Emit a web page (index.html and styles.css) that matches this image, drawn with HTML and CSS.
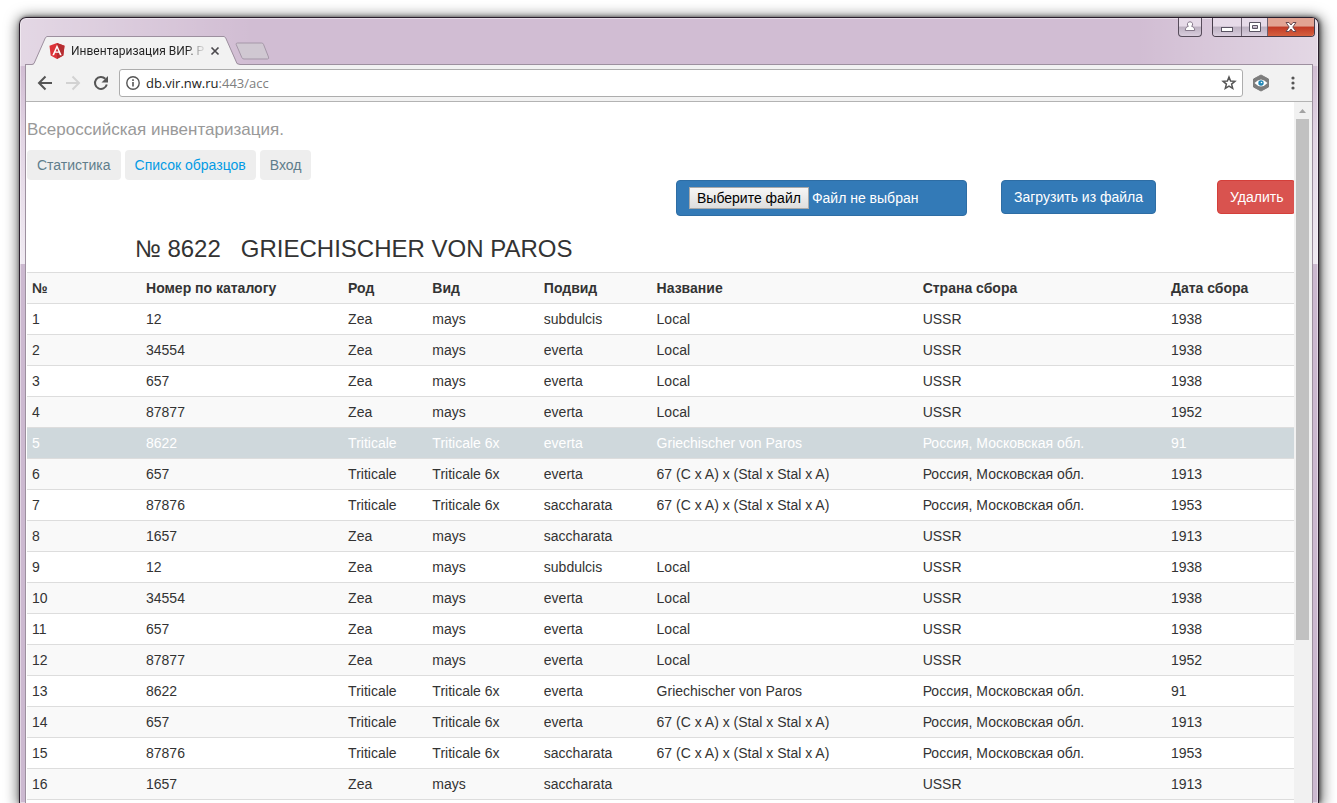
FILE: index.html
```html
<!DOCTYPE html>
<html lang="ru">
<head>
<meta charset="utf-8">
<title>Инвентаризация ВИР</title>
<link rel="stylesheet" href="styles.css">
</head>
<body>
<div class="window">
  <header class="titlebar">
    <div class="tabs">
      <div class="tab">
        <svg class="tab-shape" viewBox="0 0 208 29" preserveAspectRatio="none" aria-hidden="true"><path d="M0 28.500 L1 28.500 L2 28 L13.500 1.500 L15 .5 L192 .5 L193.500 1.500 L205 28 L208 28.500 L208 29 L0 29Z" fill="#f2f2f2"/><path d="M0 28.500 L2 27.500 L13.500 1.500 L15 .5 L192 .5 L193.500 1.500 L205 27.500 L208 28.500" fill="none" stroke="#9d909f"/></svg>
        <svg class="favicon" viewBox="0 0 16 16" aria-hidden="true"><path d="M8 0l7.500 2.700-1.200 9.700L8 16l-6.300-3.600L.5 2.700z" fill="#dd3338"/><path d="M8 0l7.500 2.700-1.200 9.700L8 16z" fill="#b52e31"/><path d="M8 1.800L3.300 12.200h1.800l1-2.400h3.800l1 2.400h1.800zM8 5.200l1.400 3.200H6.600z" fill="#fff"/></svg>
        <span class="tab-title">Инвентаризация ВИР. Р</span>
        <button class="tab-close" aria-label="Закрыть вкладку"><svg width="10" height="10" viewBox="0 0 10 10"><path d="M1.500 1.500l7 7M8.500 1.500l-7 7" stroke="#4c4a4e" stroke-width="1.700"/></svg></button>
      </div>
      <button class="new-tab" aria-label="Новая вкладка"><svg width="35" height="18" viewBox="0 0 35 18"><path d="M2.500 1h24q1.500 0 2 1.300l5 12.700q.7 2-1 2H9q-1.600 0-2.200-1.500L1.200 2.500Q.8 1 2.500 1z" fill="#d0c8d2" stroke="#a597a8"/></svg></button>
    </div>
    <div class="controls">
      <button class="ctl ctl-user" aria-label="Профиль"><svg width="12" height="12" viewBox="0 0 12 12"><path d="M6 .8a2.500 2.500 0 0 1 1.600 4.500c2 .5 3.100 1.700 3.100 4.200H1.300c0-2.500 1.100-3.700 3.100-4.200A2.500 2.500 0 0 1 6 .8z" fill="#fff" stroke="#85788a"/></svg></button>
      <div class="ctl-group">
        <button class="ctl ctl-min" aria-label="Свернуть"><svg width="14" height="12" viewBox="0 0 14 12"><rect x="1.500" y="6.500" width="11" height="4" fill="#fff" stroke="#5a5463"/></svg></button>
        <button class="ctl ctl-max" aria-label="Развернуть"><svg width="12" height="12" viewBox="0 0 12 12"><path d="M.5 1.500h11v9H.5zM3.500 4.500v3h5v-3z" fill="#fff" fill-rule="evenodd" stroke="#5a5463"/></svg></button>
        <button class="ctl ctl-close" aria-label="Закрыть"><svg width="14" height="12" viewBox="0 0 14 12"><path d="M2 1.500h3l2 2.500 2-2.500h3L8.800 6l3.200 4.500H9L7 8l-2 2.500H2L5.200 6z" fill="#fff" stroke="#6a4a50"/></svg></button>
      </div>
    </div>
  </header>

  <div class="browser">
    <nav class="toolbar" aria-label="Навигация">
      <button class="tool" aria-label="Назад"><svg width="16" height="16" viewBox="0 0 16 16"><path d="M15 8H2.500M8.500 1.500L2 8l6.500 6.500" fill="none" stroke="#555" stroke-width="2"/></svg></button>
      <button class="tool" aria-label="Вперёд"><svg width="16" height="16" viewBox="0 0 16 16"><path d="M1 8h12.500M7.500 1.500L14 8l-6.500 6.500" fill="none" stroke="#d2d2d2" stroke-width="2"/></svg></button>
      <button class="tool" aria-label="Обновить"><svg width="16" height="16" viewBox="0 0 16 16"><path d="M13.800 9.500A6 6 0 1 1 12.300 3.700" fill="none" stroke="#555" stroke-width="2"/><path d="M15 1v6.500H8.500z" fill="#555"/></svg></button>
      <div class="omnibox">
        <svg width="14" height="14" viewBox="0 0 14 14" aria-hidden="true"><circle cx="7" cy="7" r="6.200" fill="none" stroke="#555" stroke-width="1.400"/><path d="M6.200 6h1.600v4.500H6.200zM6.200 3.300h1.600v1.600H6.200z" fill="#555"/></svg>
        <span class="url">db.vir.nw.ru<span class="url-path">:443/acc</span></span>
        <button class="star" aria-label="В закладки"><svg width="16" height="16" viewBox="0 0 16 16"><path d="M8 2l1.600 4 4.300.3-3.300 2.800 1.100 4.300L8 11.100l-3.700 2.300 1.100-4.300-3.300-2.800 4.300-.3z" fill="none" stroke="#555" stroke-width="1.500"/></svg></button>
      </div>
      <button class="tool ext" aria-label="Расширение"><svg width="18" height="18" viewBox="0 0 18 18"><path d="M9 1l7.500 4v8L9 17l-7.500-4V5z" fill="#7c7c7c" stroke="#7c7c7c" stroke-linejoin="round"/><path d="M2.500 9Q9 2 15.500 9 9 16 2.500 9z" fill="#fff"/><circle cx="9" cy="9" r="2.700" fill="#2487b5"/><circle cx="9.500" cy="8.500" r=".8" fill="#fff"/></svg></button>
      <button class="tool menu" aria-label="Меню"><svg width="4" height="14" viewBox="0 0 4 14"><circle cx="2" cy="2" r="1.600" fill="#555"/><circle cx="2" cy="7" r="1.600" fill="#555"/><circle cx="2" cy="12" r="1.600" fill="#555"/></svg></button>
    </nav>

    <div class="viewport">
      <main class="page">
        <p class="brand">Всероссийская инвентаризация.</p>
        <nav class="nav" aria-label="Разделы">
          <a href="#stat">Статистика</a>
          <a href="#list" class="active">Список образцов</a>
          <a href="#login">Вход</a>
        </nav>
        <div class="actions">
          <label class="btn btn-primary file"><input type="file" class="file-input"><span class="file-button">Выберите файл</span><span>Файл не выбран</span></label>
          <button class="btn btn-primary upload">Загрузить из файла</button>
          <button class="btn btn-danger remove">Удалить</button>
        </div>
        <h3 class="heading"><span>№ 8622</span><span>GRIECHISCHER VON PAROS</span></h3>
        <table class="samples">
          <colgroup><col class="c-num"><col class="c-cat"><col class="c-genus"><col class="c-species"><col class="c-sub"><col class="c-name"><col class="c-country"><col class="c-date"></colgroup>
          <thead><tr><th>№</th><th>Номер по каталогу</th><th>Род</th><th>Вид</th><th>Подвид</th><th>Название</th><th>Страна сбора</th><th>Дата сбора</th></tr></thead>
          <tbody>
            <tr><td>1</td><td>12</td><td>Zea</td><td>mays</td><td>subdulcis</td><td>Local</td><td>USSR</td><td>1938</td></tr>
            <tr><td>2</td><td>34554</td><td>Zea</td><td>mays</td><td>everta</td><td>Local</td><td>USSR</td><td>1938</td></tr>
            <tr><td>3</td><td>657</td><td>Zea</td><td>mays</td><td>everta</td><td>Local</td><td>USSR</td><td>1938</td></tr>
            <tr><td>4</td><td>87877</td><td>Zea</td><td>mays</td><td>everta</td><td>Local</td><td>USSR</td><td>1952</td></tr>
            <tr class="selected"><td>5</td><td>8622</td><td>Triticale</td><td>Triticale 6x</td><td>everta</td><td>Griechischer von Paros</td><td>Россия, Московская обл.</td><td>91</td></tr>
            <tr><td>6</td><td>657</td><td>Triticale</td><td>Triticale 6x</td><td>everta</td><td>67 (C x A) x (Stal x Stal x A)</td><td>Россия, Московская обл.</td><td>1913</td></tr>
            <tr><td>7</td><td>87876</td><td>Triticale</td><td>Triticale 6x</td><td>saccharata</td><td>67 (C x A) x (Stal x Stal x A)</td><td>Россия, Московская обл.</td><td>1953</td></tr>
            <tr><td>8</td><td>1657</td><td>Zea</td><td>mays</td><td>saccharata</td><td></td><td>USSR</td><td>1913</td></tr>
            <tr><td>9</td><td>12</td><td>Zea</td><td>mays</td><td>subdulcis</td><td>Local</td><td>USSR</td><td>1938</td></tr>
            <tr><td>10</td><td>34554</td><td>Zea</td><td>mays</td><td>everta</td><td>Local</td><td>USSR</td><td>1938</td></tr>
            <tr><td>11</td><td>657</td><td>Zea</td><td>mays</td><td>everta</td><td>Local</td><td>USSR</td><td>1938</td></tr>
            <tr><td>12</td><td>87877</td><td>Zea</td><td>mays</td><td>everta</td><td>Local</td><td>USSR</td><td>1952</td></tr>
            <tr><td>13</td><td>8622</td><td>Triticale</td><td>Triticale 6x</td><td>everta</td><td>Griechischer von Paros</td><td>Россия, Московская обл.</td><td>91</td></tr>
            <tr><td>14</td><td>657</td><td>Triticale</td><td>Triticale 6x</td><td>everta</td><td>67 (C x A) x (Stal x Stal x A)</td><td>Россия, Московская обл.</td><td>1913</td></tr>
            <tr><td>15</td><td>87876</td><td>Triticale</td><td>Triticale 6x</td><td>saccharata</td><td>67 (C x A) x (Stal x Stal x A)</td><td>Россия, Московская обл.</td><td>1953</td></tr>
            <tr><td>16</td><td>1657</td><td>Zea</td><td>mays</td><td>saccharata</td><td></td><td>USSR</td><td>1913</td></tr>
          </tbody>
        </table>
      </main>
      <div class="scrollbar" aria-hidden="true">
        <svg class="scroll-up" viewBox="0 0 13 17"><path d="M3 11l3.500-4 3.500 4z" fill="#a3a3a3"/></svg>
        <div class="thumb"></div>
      </div>
    </div>
  </div>
</div>
</body>
</html>
```
FILE: styles.css
```css
* { box-sizing: border-box; }

body {
  margin: 0;
  height: 100vh;
  padding: 17px 18px 0 19px;
  overflow: hidden;
  background: #fff;
  color: #333;
  font: 14px/20px "Liberation Sans", Arial, sans-serif;
}

button {
  margin: 0;
  padding: 0;
  border: 0;
  background: none;
  font: inherit;
  color: inherit;
}

svg { display: block; }

/* Window frame */
.window {
  display: flex;
  flex-direction: column;
  height: 100%;
  padding: 0 5px;
  border: 1px solid #2a1e2c;
  border-bottom: 0;
  border-radius: 7px 7px 0 0;
  background:
    linear-gradient(90deg, rgba(255, 255, 255, .4), transparent 18%, transparent 86%, rgba(255, 255, 255, .4)) top / 100% 48px no-repeat,
    linear-gradient(#d1bdd3 48px, #e2d5e4 120px, #f0eaf2 246px, #ccb9d0 246px);
  box-shadow: inset 0 0 0 1px rgba(255, 255, 255, .45), 1px 0 4px rgba(0, 0, 0, .6), 1px 2px 14px 2px rgba(0, 0, 0, .6);
}

.titlebar {
  display: flex;
  flex: none;
  justify-content: space-between;
  height: 46px;
}

.tabs {
  display: flex;
  align-items: flex-end;
  padding-left: 7px;
}

.tab {
  position: relative;
  z-index: 1;
  display: flex;
  align-items: center;
  width: 208px;
  height: 29px;
  margin-bottom: -1px;
  padding: 0 20px 0 17px;
}

.tab-shape {
  position: absolute;
  inset: 0;
  width: 100%;
  height: 100%;
}

.favicon {
  position: relative;
  flex: none;
  width: 16px;
  height: 16px;
}

.tab-title {
  position: relative;
  flex: 1;
  margin-left: 6px;
  white-space: nowrap;
  color: transparent;
  background: linear-gradient(90deg, #222 116px, #ccc 130px);
  background-clip: text;
  font: 12px/16px Roboto, "Open Sans", sans-serif;
}

.tab-close {
  position: relative;
  margin-left: 6px;
}

.new-tab { margin: 0 0 4px -5px; }

.controls {
  display: flex;
  align-items: flex-start;
  gap: 10px;
  margin-right: -2px;
}

.ctl {
  display: flex;
  align-items: center;
  justify-content: center;
  height: 19px;
  background: linear-gradient(#e6dae8 45%, #bcb0c1 50%, #d9cddd);
}

.ctl-user {
  width: 24px;
  border: 1px solid #574c5b;
  border-top: 0;
  border-radius: 0 0 4px 4px;
}

.ctl-group {
  display: flex;
  border: 1px solid #473c4a;
  border-top: 0;
  border-radius: 0 0 4px 4px;
  overflow: hidden;
}

.ctl-group .ctl { height: 18px; }
.ctl-min { width: 28px; }
.ctl-max { width: 27px; border: 1px solid #6c6170; border-width: 0 1px; }
.ctl-close { width: 46px; background: linear-gradient(#e2a494 45%, #c13a26 50%, #d6603f); }

/* Browser chrome */
.browser {
  display: flex;
  flex: 1;
  flex-direction: column;
  min-height: 0;
  border: 1px solid #9d909f;
  border-bottom: 0;
}

.toolbar {
  display: flex;
  flex: none;
  align-items: center;
  height: 37px;
  padding: 0 6px 0 5px;
  border-bottom: 1px solid #b3b3b3;
  background: #f2f2f2;
}

.tool {
  display: flex;
  justify-content: center;
  width: 28px;
}

.omnibox {
  display: flex;
  flex: 1;
  align-items: center;
  height: 28px;
  margin-left: 4px;
  padding: 0 5px 0 6px;
  border: 1px solid #adadad;
  border-radius: 3px;
  background: #fff;
}

.url {
  flex: 1;
  margin-left: 6px;
  color: #222;
  font: 13px/20px "Open Sans", "Noto Sans", sans-serif;
}

.url-path { color: #808080; }
.ext { width: 36px; }
.menu { width: 27px; }

/* Page */
.viewport {
  display: flex;
  flex: 1;
  min-height: 0;
  overflow: hidden;
  background: #fff;
}

.page {
  flex: 1;
  min-width: 0;
  padding: 18px 0 0 1px;
  overflow: hidden;
}

.brand {
  margin: 0 0 10px;
  color: #999;
  font-size: 17px;
}

.nav {
  display: flex;
  gap: 4px;
}

.nav a {
  padding: 5px 10px;
  border-radius: 4px;
  background: #eee;
  color: #607d8b;
  text-decoration: none;
}

.nav a.active { color: #039be5; }

.actions {
  display: grid;
  grid-template-columns: 649fr 325fr 216fr 77fr;
  align-items: start;
}

.btn {
  justify-self: start;
  padding: 6px 12px;
  border: 1px solid;
  border-radius: 4px;
  color: #fff;
  white-space: nowrap;
}

.btn-primary { border-color: #2e6da4; background: #337ab7; }
.btn-danger { border-color: #d43f3a; background: #d9534f; }

.actions { grid-template-columns: minmax(0, 649fr) minmax(0, 325fr) minmax(0, 216fr) minmax(0, 77fr); }

.file {
  grid-column: 2;
  display: flex;
  align-items: center;
  gap: 3px;
  width: 291px;
}

.file-input {
  position: absolute;
  width: 1px;
  height: 1px;
  opacity: 0;
}

.file-button {
  padding: 0 7px;
  border: 1px solid #a9a9a9;
  background: linear-gradient(#f6f6f6, #dedede);
  color: #000;
}

.heading {
  display: flex;
  gap: 20px;
  margin: 20px 0 10px 108px;
  font-size: 24px;
  font-weight: 400;
  line-height: 26px;
}

.samples {
  width: 100%;
  table-layout: fixed;
  border-collapse: collapse;
  border-bottom: 1px solid #ddd;
}

.c-num { width: 9%; }
.c-cat { width: 15.95%; }
.c-genus { width: 6.65%; }
.c-species { width: 8.8%; }
.c-sub { width: 8.9%; }
.c-name { width: 21%; }
.c-country { width: 19.6%; }

.samples th,
.samples td {
  padding: 5px;
  border-top: 1px solid #ddd;
  text-align: left;
  white-space: nowrap;
}

.samples thead tr,
.samples tbody tr:nth-child(even) { background: #f9f9f9; }

.samples tbody tr.selected {
  background: #cfd8dc;
  color: #fff;
}

.scrollbar {
  flex: none;
  width: 18px;
  padding: 0 3px 0 2px;
  background: #f1f1f1;
}

.scroll-up {
  width: 13px;
  height: 17px;
}

.thumb {
  height: 521px;
  background: #c1c1c1;
}
```
